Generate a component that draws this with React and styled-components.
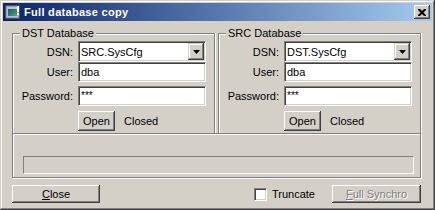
import React from "react";
import styled, { createGlobalStyle, css } from "styled-components";

const GlobalStyle = createGlobalStyle`
  html, body { margin: 0; padding: 0; background: #d4d0c8; }
  body { font-family: "Liberation Sans", Arial, sans-serif; font-size: 11px; color: #000; }
  * { box-sizing: border-box; }
`;

const raised = css`
  box-shadow: inset -1px -1px #404040, inset 1px 1px #ffffff,
    inset -2px -2px #808080, inset 2px 2px #d4d0c8;
`;

const sunken = css`
  border: 1px solid;
  border-color: #808080 #ffffff #ffffff #808080;
  box-shadow: inset 1px 1px #404040, inset -1px -1px #d4d0c8;
`;

const Window = styled.div`
  width: 435px;
  height: 210px;
  padding: 3px;
  background: #d4d0c8;
  box-shadow: inset -1px -1px #404040, inset 1px 1px #d4d0c8,
    inset -2px -2px #808080, inset 2px 2px #ffffff;
  display: flex;
  flex-direction: column;
`;

const TitleBar = styled.div`
  height: 18px;
  display: flex;
  align-items: center;
  padding: 0 2px 0 2px;
  background: linear-gradient(to right, #0a246a, #a6caf0);
`;

const TitleText = styled.span`
  flex: 1;
  margin-left: 3px;
  color: #fff;
  font-weight: bold;
  font-size: 11px;
  letter-spacing: 0.3px;
  white-space: nowrap;
`;

const CaptionButton = styled.div`
  width: 16px;
  height: 14px;
  background: #d4d0c8;
  ${raised};
  display: flex;
  align-items: center;
  justify-content: center;
`;

const Content = styled.div`
  padding: 12px 0 0 9px;
  width: 418px;
`;

const GroupRow = styled.div`
  display: flex;
  gap: 3px;
`;

const Group = styled.div`
  position: relative;
  width: 203px;
  height: 100px;
  border: 1px solid #808080;
  border-bottom: none;
  box-shadow: inset 1px 1px #ffffff, 1px 0 0 #ffffff;
  padding-top: 7px;
`;

const GroupTitle = styled.span`
  position: absolute;
  top: -7px;
  left: 7px;
  padding: 0 2px;
  line-height: 13px;
  background: #d4d0c8;
  white-space: nowrap;
`;

const FieldRow = styled.div`
  display: flex;
  align-items: center;
  margin-top: ${(p) => p.$top || 0}px;
  height: ${(p) => p.$h || 20}px;
`;

const FieldLabel = styled.span`
  width: 60px;
  margin-right: 5px;
  text-align: right;
  white-space: nowrap;
`;

const TextBox = styled.div`
  width: 128px;
  height: 100%;
  background: #fff;
  ${sunken};
  padding-left: 2px;
  display: flex;
  align-items: center;
  white-space: nowrap;
  font-size: ${(p) => (p.$mask ? "10px" : "11px")};
  align-items: ${(p) => (p.$mask ? "flex-start" : "center")};
  padding-top: ${(p) => (p.$mask ? "3px" : "0")};
`;

const ComboBox = styled.div`
  width: 128px;
  height: 100%;
  background: #fff;
  ${sunken};
  display: flex;
  align-items: stretch;
  padding: 1px;
`;

const ComboText = styled.span`
  flex: 1;
  padding-left: 1px;
  display: flex;
  align-items: center;
`;

const DropButton = styled.div`
  width: 16px;
  background: #d4d0c8;
  box-shadow: inset -1px -1px #404040, inset 1px 1px #d4d0c8,
    inset -2px -2px #808080, inset 2px 2px #ffffff;
  display: flex;
  align-items: center;
  justify-content: center;
`;

const PushButton = styled.div`
  width: ${(p) => p.$w}px;
  height: ${(p) => p.$h}px;
  background: #d4d0c8;
  ${raised};
  display: flex;
  align-items: center;
  justify-content: center;
  white-space: nowrap;
  color: ${(p) => (p.$disabled ? "#808080" : "#000")};
  text-shadow: ${(p) => (p.$disabled ? "1px 1px 0 #ffffff" : "none")};
`;

const Indent = styled.span`
  width: 65px;
`;

const StatusText = styled.span`
  margin-left: 9px;
`;

const ProgressPanel = styled.div`
  width: 409px;
  height: 45px;
  border: 1px solid #808080;
  box-shadow: inset 1px 1px #ffffff, 1px 1px 0 #ffffff;
  padding: 22px 0 0 10px;
`;

const ProgressTrack = styled.div`
  width: 391px;
  height: 18px;
  border: 1px solid;
  border-color: #808080 #ffffff #ffffff #808080;
`;

const Footer = styled.div`
  margin-top: 7px;
  width: 409px;
  display: flex;
  align-items: center;
  justify-content: space-between;
`;

const FooterRight = styled.div`
  display: flex;
  align-items: center;
`;

const CheckLabel = styled.label`
  display: flex;
  align-items: center;
  gap: 5px;
  margin-right: 17px;
`;

const CheckBox = styled.span`
  width: 13px;
  height: 13px;
  background: #fff;
  ${sunken};
`;

const Mnemonic = styled.u`
  text-decoration: underline;
  text-underline-offset: 1px;
`;

const TitleIcon = () => (
  <svg width="16" height="16" viewBox="0 0 16 16">
    <defs>
      <linearGradient id="ig" x1="0" y1="0" x2="1" y2="1">
        <stop offset="0" stopColor="#1b4f7a" />
        <stop offset="0.6" stopColor="#2f8a7a" />
        <stop offset="1" stopColor="#5fae5a" />
      </linearGradient>
    </defs>
    <rect x="1" y="2" width="13" height="12" fill="#c0c0c0" />
    <rect x="1" y="2" width="13" height="12" fill="none" stroke="#808080" strokeWidth="1" />
    <rect x="3" y="5" width="9" height="7" fill="url(#ig)" />
    <rect x="12" y="2" width="2" height="6" fill="#ffffff" />
    <rect x="12" y="9" width="2" height="2" fill="#ffffff" />
  </svg>
);

const CloseGlyph = () => (
  <svg width="8" height="7" viewBox="0 0 8 7">
    <path d="M0 0h2l2 2 2-2h2v1L5.5 3.5 8 6v1H6L4 5 2 7H0V6l2.5-2.5L0 1z" fill="#000" />
  </svg>
);

const ArrowGlyph = () => (
  <svg width="7" height="4" viewBox="0 0 7 4">
    <path d="M0 0h7L3.5 4z" fill="#000" />
  </svg>
);

const DbGroup = ({ title, dsn }) => (
  <Group>
    <GroupTitle>{title}</GroupTitle>
    <FieldRow $h={21}>
      <FieldLabel>DSN:</FieldLabel>
      <ComboBox>
        <ComboText>{dsn}</ComboText>
        <DropButton>
          <ArrowGlyph />
        </DropButton>
      </ComboBox>
    </FieldRow>
    <FieldRow $h={20}>
      <FieldLabel>User:</FieldLabel>
      <TextBox>dba</TextBox>
    </FieldRow>
    <FieldRow $h={20} $top={4}>
      <FieldLabel>Password:</FieldLabel>
      <TextBox $mask>***</TextBox>
    </FieldRow>
    <FieldRow $h={20} $top={5}>
      <Indent />
      <PushButton $w={37} $h={20}>Open</PushButton>
      <StatusText>Closed</StatusText>
    </FieldRow>
  </Group>
);

export default function App() {
  return (
    <>
      <GlobalStyle />
      <Window>
        <TitleBar>
          <TitleIcon />
          <TitleText>Full database copy</TitleText>
          <CaptionButton>
            <CloseGlyph />
          </CaptionButton>
        </TitleBar>
        <Content>
          <GroupRow>
            <DbGroup title="DST Database" dsn="SRC.SysCfg" />
            <DbGroup title="SRC Database" dsn="DST.SysCfg" />
          </GroupRow>
          <ProgressPanel>
            <ProgressTrack />
          </ProgressPanel>
          <Footer>
            <PushButton $w={88} $h={18}>
              <span>
                <Mnemonic>C</Mnemonic>lose
              </span>
            </PushButton>
            <FooterRight>
              <CheckLabel>
                <CheckBox />
                Truncate
              </CheckLabel>
              <PushButton $w={89} $h={18} $disabled>
                <span>
                  <Mnemonic>F</Mnemonic>ull Synchro
                </span>
              </PushButton>
            </FooterRight>
          </Footer>
        </Content>
      </Window>
    </>
  );
}
